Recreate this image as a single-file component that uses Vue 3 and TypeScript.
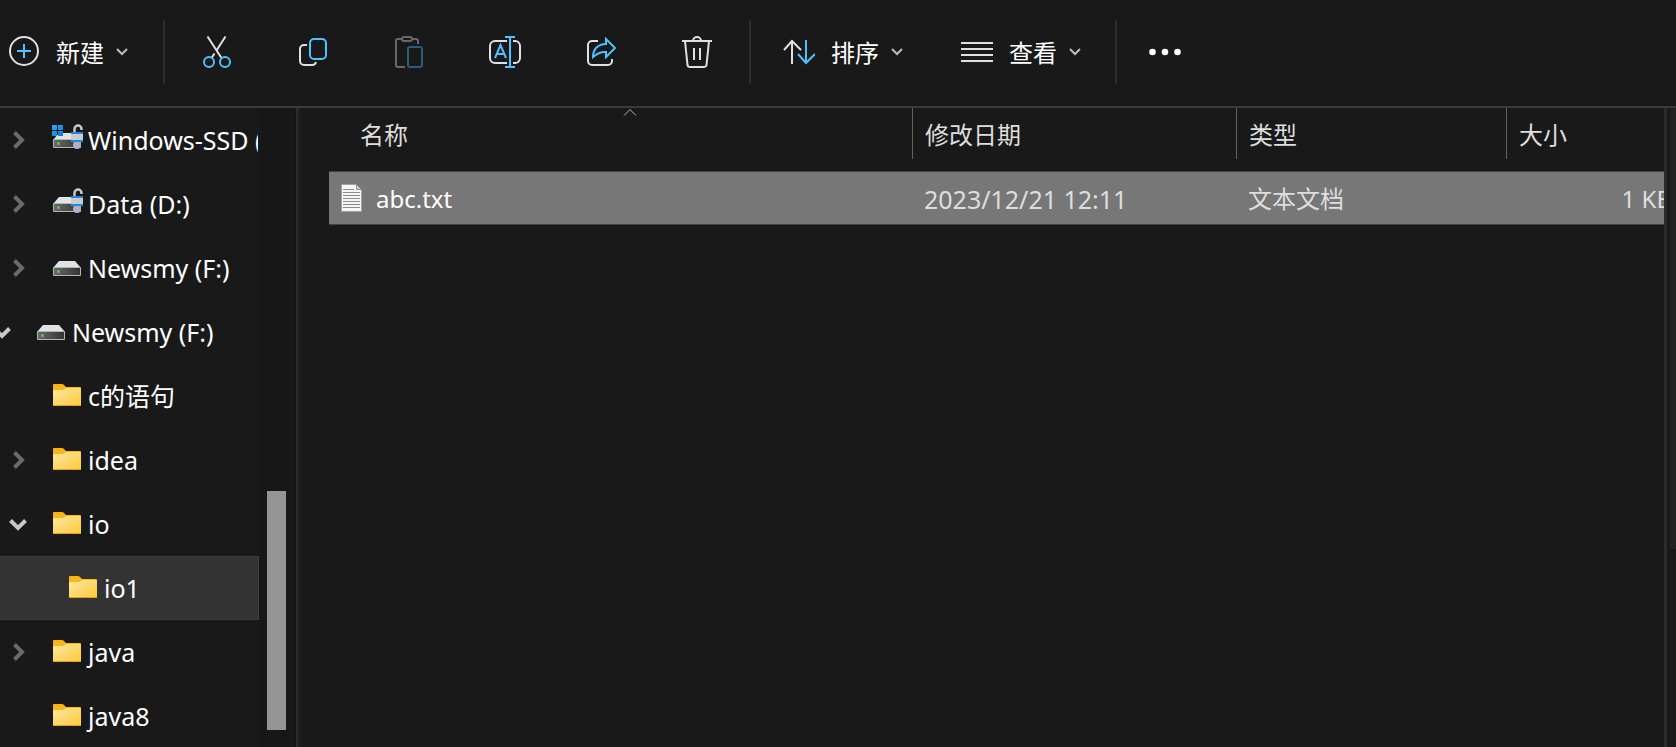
<script setup lang="ts">
import { ref } from 'vue'

type Kind = 'system' | 'locked' | 'drive' | 'folder'
type State = 'open' | 'closed' | 'leaf'

interface TreeNode {
  id: number
  label: string
  kind: Kind
  state: State
  level: 0 | 1 | 2
}

interface FileEntry {
  name: string
  modified: string
  type: string
  size: string
}

const nodes: TreeNode[] = [
  { id: 1, label: 'Windows-SSD (C:)', kind: 'system', state: 'closed', level: 1 },
  { id: 2, label: 'Data (D:)', kind: 'locked', state: 'closed', level: 1 },
  { id: 3, label: 'Newsmy (F:)', kind: 'drive', state: 'closed', level: 1 },
  { id: 4, label: 'Newsmy (F:)', kind: 'drive', state: 'open', level: 0 },
  { id: 5, label: 'c的语句', kind: 'folder', state: 'leaf', level: 1 },
  { id: 6, label: 'idea', kind: 'folder', state: 'closed', level: 1 },
  { id: 7, label: 'io', kind: 'folder', state: 'open', level: 1 },
  { id: 8, label: 'io1', kind: 'folder', state: 'leaf', level: 2 },
  { id: 9, label: 'java', kind: 'folder', state: 'closed', level: 1 },
  { id: 10, label: 'java8', kind: 'folder', state: 'leaf', level: 1 },
]

const files: FileEntry[] = [
  { name: 'abc.txt', modified: '2023/12/21 12:11', type: '文本文档', size: '1 KB' },
]

const selectedNode = ref(8)
const selectedFile = ref('abc.txt')
</script>

<template>
  <div class="explorer">
    <svg class="defs" aria-hidden="true">
      <defs>
        <linearGradient id="folderFace" x1="0" y1="0" x2="1" y2="1">
          <stop offset="0" stop-color="#ffe7a2" />
          <stop offset="1" stop-color="#ffc937" />
        </linearGradient>
        <linearGradient id="driveFace" x1="0" y1="0" x2="1" y2="0">
          <stop offset="0" stop-color="#6a6a6a" />
          <stop offset="1" stop-color="#333333" />
        </linearGradient>
        <linearGradient id="logoFace" x1="0" y1="0" x2="1" y2="1">
          <stop offset="0" stop-color="#25b0f0" />
          <stop offset="1" stop-color="#0a7ad6" />
        </linearGradient>
      </defs>
    </svg>

    <header class="toolbar" role="toolbar">
      <button type="button" class="command create">
        <svg class="icon" viewBox="0 0 32 32">
          <circle class="line" cx="16" cy="15" r="14" />
          <path class="accent" d="M16 8v14M9 15h14" />
        </svg>
        <span>新建</span>
        <svg class="caret" viewBox="0 0 12 8"><path d="M1 1l5 5 5-5" /></svg>
      </button>
      <span class="separator"></span>

      <button type="button" class="tool" aria-label="剪切">
        <svg class="icon" viewBox="0 0 32 32">
          <path class="line" d="M6.500 .5L20.500 22M24.500 .5L15.500 14.500M13.500 17.500L10.500 22" />
          <circle class="accent" cx="8" cy="26" r="5" />
          <circle class="accent" cx="24" cy="26" r="5" />
        </svg>
      </button>
      <button type="button" class="tool" aria-label="复制">
        <svg class="icon" viewBox="0 0 32 32">
          <path class="line" d="M10 9H7a4 4 0 0 0-4 4v12a4 4 0 0 0 4 4h8a4 4 0 0 0 4-3" />
          <rect class="accent" x="13" y="3" width="16" height="20" rx="4" />
        </svg>
      </button>
      <button type="button" class="tool" aria-label="粘贴" disabled>
        <svg class="icon" viewBox="0 0 32 32">
          <path class="line" d="M12 31H5a2 2 0 0 1-2-2V5a2 2 0 0 1 2-2h3M19 3h4a2 2 0 0 1 2 2v3" />
          <rect class="line" x="9" y="1" width="10" height="4" rx="2" />
          <rect class="accent" x="15" y="11" width="14" height="20" rx="2" />
        </svg>
      </button>
      <button type="button" class="tool" aria-label="重命名">
        <svg class="icon" viewBox="0 0 32 32">
          <path class="line" d="M18 5H6a5 5 0 0 0-5 5v12a5 5 0 0 0 5 5h12M24 5h2a5 5 0 0 1 5 5v12a5 5 0 0 1-5 5h-2" />
          <path class="accent" d="M21 1v30M16 1h10M16 31h10M6 22l5.500-13L17 22M8 18h7" />
        </svg>
      </button>
      <button type="button" class="tool" aria-label="共享">
        <svg class="icon" viewBox="0 0 32 32">
          <path class="line" d="M13 5H7a4 4 0 0 0-4 4v16a4 4 0 0 0 4 4h16a4 4 0 0 0 4-4v-2" />
          <path class="accent" d="M21 3l9 9-9 9v-5c-5-.5-9 1.500-13 5C8 13 13 8 21 8z" />
        </svg>
      </button>
      <button type="button" class="tool" aria-label="删除">
        <svg class="icon" viewBox="0 0 32 32">
          <path class="line" d="M1 5h30M12 5a4 4 0 0 1 8 0M4 5l2.500 24a2.500 2.500 0 0 0 2.500 2h14a2.500 2.500 0 0 0 2.500-2L28 5M13 12v12M19 12v12" />
        </svg>
      </button>
      <span class="separator"></span>

      <button type="button" class="command sort">
        <svg class="icon" viewBox="0 0 32 32">
          <path class="line" d="M9 28V5M1 14l8-9 9 9" />
          <path class="accent" d="M23 4v23M15 18l8 9 9-9" />
        </svg>
        <span>排序</span>
        <svg class="caret" viewBox="0 0 12 8"><path d="M1 1l5 5 5-5" /></svg>
      </button>
      <button type="button" class="command view">
        <svg class="icon" viewBox="0 0 32 32">
          <path class="line" d="M0 7h32M0 13h32M0 19h32M0 25h32" />
        </svg>
        <span>查看</span>
        <svg class="caret" viewBox="0 0 12 8"><path d="M1 1l5 5 5-5" /></svg>
      </button>
      <span class="separator"></span>

      <button type="button" class="tool" aria-label="更多">
        <svg class="icon" viewBox="0 0 32 32">
          <g fill="#ffffff">
            <circle cx="3.500" cy="16" r="3.300" />
            <circle cx="16" cy="16" r="3.300" />
            <circle cx="28.500" cy="16" r="3.300" />
          </g>
        </svg>
      </button>
    </header>

    <div class="body">
      <nav class="sidebar">
        <ul class="tree">
          <li v-for="node in nodes" :key="node.id">
            <button
              type="button"
              class="node"
              :class="['level-' + node.level, { selected: node.id === selectedNode }]"
              @click="selectedNode = node.id"
            >
              <svg class="twist" :class="node.state" viewBox="0 0 24 24">
                <path v-if="node.state === 'closed'" d="M8.500 4.500L16 12l-7.500 7.500" />
                <path v-else-if="node.state === 'open'" d="M4.500 8.500L12 16l7.500-7.500" />
              </svg>
              <svg class="glyph" viewBox="0 0 32 32">
                <template v-if="node.kind === 'folder'">
                  <path fill="#f9b515" d="M2 5q0-1 1-1h8q1.500 0 3 2l1 1h14q1 0 1 1v16H2z" />
                  <path fill="url(#folderFace)" d="M2 10h9.500q1 0 2-1l1.500-1h14q1 0 1 1v16q0 1-1 1H3q-1 0-1-1z" />
                  <path fill="#e0a21c" d="M2 25h28q0 1-1 1H3q-1 0-1-1z" />
                </template>
                <template v-else>
                  <path fill="#e2e3e5" d="M8 9h16l6 7H2z" />
                  <path fill="url(#driveFace)" stroke="#b4b4b4" d="M2.500 15.500h27v8h-27z" />
                  <circle cx="7.500" cy="19.500" r="1.500" fill="#3fdc3f" />
                  <g v-if="node.kind !== 'drive'">
                    <path fill="none" stroke="#c3cad2" stroke-width="2.500" d="M23.500 9V5a3.500 3.500 0 0 1 7 0v1" />
                    <circle cx="26" cy="21" r="4" fill="#a9b3bf" />
                    <path fill="#c9cdd2" d="M20 8h12v10H20z" />
                    <path fill="#2486dc" d="M20 8h12v2H20zM20 16h12v2H20z" />
                  </g>
                  <path
                    v-if="node.kind === 'system'"
                    fill="url(#logoFace)"
                    d="M1 1h5v5H1zM7 1h5v5H7zM1 7h5v5H1zM7 7h5v5H7z"
                  />
                </template>
              </svg>
              <span>{{ node.label }}</span>
            </button>
          </li>
        </ul>
        <div class="gutter"><div class="thumb"></div></div>
        <div class="splitter"></div>
      </nav>

      <main class="content">
        <table class="files">
          <colgroup>
            <col />
            <col class="col-date" />
            <col class="col-type" />
            <col class="col-size" />
          </colgroup>
          <thead>
            <tr>
              <th scope="col" aria-sort="ascending">
                <svg class="ascending" viewBox="0 0 14 8"><path d="M1 7.500l6-6 6 6" /></svg>
                名称
              </th>
              <th scope="col">修改日期</th>
              <th scope="col">类型</th>
              <th scope="col">大小</th>
            </tr>
          </thead>
          <tbody>
            <tr class="spacer"><td colspan="4"></td></tr>
            <tr
              v-for="file in files"
              :key="file.name"
              class="file"
              :class="{ selected: file.name === selectedFile }"
              @click="selectedFile = file.name"
            >
              <td>
                <div class="name">
                  <svg class="page" viewBox="0 0 22 28">
                    <path fill="#f7f7f7" stroke="#a0a0a0" d="M.5 .5h15l5 5v22H.5z" />
                    <path fill="#d4d4d4" stroke="#8c8c8c" d="M15.500 .5v5h5z" />
                    <path stroke="#8d8d8d" d="M2 5.500h11M2 8.500h17M2 11.500h17M2 14.500h17M2 17.500h17M2 20.500h17M2 23.500h17" />
                  </svg>
                  <span>{{ file.name }}</span>
                </div>
              </td>
              <td class="modified">{{ file.modified }}</td>
              <td>{{ file.type }}</td>
              <td class="size">{{ file.size }}</td>
            </tr>
          </tbody>
        </table>
      </main>

      <aside class="preview"><div class="track"></div></aside>
    </div>
  </div>
</template>

<style>
body {
  background: #191919;
}
</style>

<style scoped>
.explorer {
  display: flex;
  flex-direction: column;
  height: 100vh;
  overflow: hidden;
  background: #191919;
  color: #ffffff;
  font-family: "Noto Sans", "Noto Sans CJK SC", sans-serif;
  font-size: 24px;
  line-height: 32px;
}

.explorer * {
  box-sizing: border-box;
}

.defs {
  position: absolute;
  width: 0;
  height: 0;
}

button {
  margin: 0;
  padding: 0;
  border: 0;
  background: none;
  color: inherit;
  font: inherit;
  text-align: left;
}

.toolbar {
  display: flex;
  flex: none;
  align-items: center;
  height: 108px;
  padding-bottom: 2px;
  border-bottom: 2px solid #3a3a3a;
}

.command {
  display: flex;
  align-items: center;
  height: 64px;
}

.command span {
  margin: 0 12px 0 16px;
  padding-top: 2px;
}

.create {
  width: 155px;
  margin-left: 8px;
}

.sort {
  width: 178px;
  padding-left: 32px;
}

.view {
  width: 186px;
  padding-left: 32px;
}

.tool {
  display: flex;
  align-items: center;
  justify-content: center;
  width: 96px;
  height: 64px;
}

.tool:disabled {
  opacity: 0.4;
}

.separator {
  flex: none;
  width: 2px;
  height: 64px;
  background: #2d2d2d;
}

.separator + .tool {
  margin-left: 4px;
}

.tool + .separator {
  margin-left: 4px;
}

.tool:last-child {
  margin-left: 0;
}

.icon {
  flex: none;
  width: 32px;
  height: 32px;
  fill: none;
  stroke-width: 2;
}

.line {
  stroke: #e0e0e0;
}

.accent {
  stroke: #4cc2ff;
}

.caret {
  width: 12px;
  height: 8px;
  fill: none;
  stroke: #bdbdbd;
  stroke-width: 2;
}

.body {
  display: flex;
  flex: 1;
  min-height: 0;
}

.sidebar {
  display: flex;
  flex: none;
  width: 301px;
}

.tree {
  width: 259px;
  margin: 0;
  padding: 0;
  overflow: hidden;
  list-style: none;
  font-size: 25px;
}

.node {
  display: flex;
  align-items: center;
  width: 100%;
  height: 64px;
  overflow: hidden;
  border: 1px solid transparent;
  border-left: 0;
  white-space: nowrap;
}

.node.selected {
  border-color: #3c3c3c;
  background: #333333;
}

.twist {
  flex: none;
  width: 24px;
  height: 24px;
  fill: none;
  stroke: #6b6b6b;
  stroke-width: 4;
}

.twist.open {
  stroke: #c8c8c8;
}

.level-0 .twist {
  margin-left: -10px;
}

.level-1 .twist {
  margin-left: 6px;
}

.level-2 .twist {
  margin-left: 22px;
}

.glyph {
  flex: none;
  width: 32px;
  height: 32px;
  margin: 0 5px 0 21px;
}

.gutter {
  display: flex;
  flex: 1;
  flex-direction: column;
  justify-content: flex-end;
  padding: 0 9px 17px 8px;
  border-right: 1px solid #131313;
  background: #171717;
}

.thumb {
  height: 239px;
  background: #959595;
}

.splitter {
  width: 5px;
  border-left: 2px solid #2b2b2b;
  background: #1f1f1f;
}

.content {
  flex: 1;
  min-width: 0;
  padding-left: 28px;
  overflow: hidden;
}

.files {
  width: calc(100% + 17px);
  border-collapse: separate;
  border-spacing: 0;
  table-layout: fixed;
}

.col-date {
  width: 324px;
}

.col-type {
  width: 270px;
}

.col-size {
  width: 175px;
}

th,
td {
  padding: 0 12px;
  text-align: left;
  font-weight: 400;
  white-space: nowrap;
}

th {
  position: relative;
  height: 51px;
  padding-top: 2px;
  border-left: 1px solid #636363;
  color: #dedede;
}

th:first-child {
  padding-left: 30px;
  border-left-color: transparent;
}

.ascending {
  position: absolute;
  top: 0;
  left: calc(50% + 2px);
  width: 14px;
  height: 8px;
  fill: none;
  stroke: #b5b5b5;
}

.spacer td {
  height: 12px;
  padding: 0;
}

.file td {
  height: 54px;
  padding-top: 2px;
  border: solid transparent;
  border-width: 1px 0;
  color: #dedede;
}

.file.selected td {
  border-color: #444444;
  background: #777777;
}

.file td:first-child {
  padding-top: 0;
  color: #ffffff;
}

.name {
  display: flex;
  align-items: center;
  gap: 13px;
}

.name span {
  padding-top: 2px;
}

.page {
  width: 22px;
  height: 28px;
  fill: none;
}

.file .modified {
  font-size: 25px;
}

.file .size {
  padding-right: 9px;
  text-align: right;
}

.preview {
  flex: none;
  width: 12px;
  border-left: 3px solid #2b2b2b;
  padding-left: 3px;
}

.track {
  height: 69%;
  background: #222222;
}
</style>
